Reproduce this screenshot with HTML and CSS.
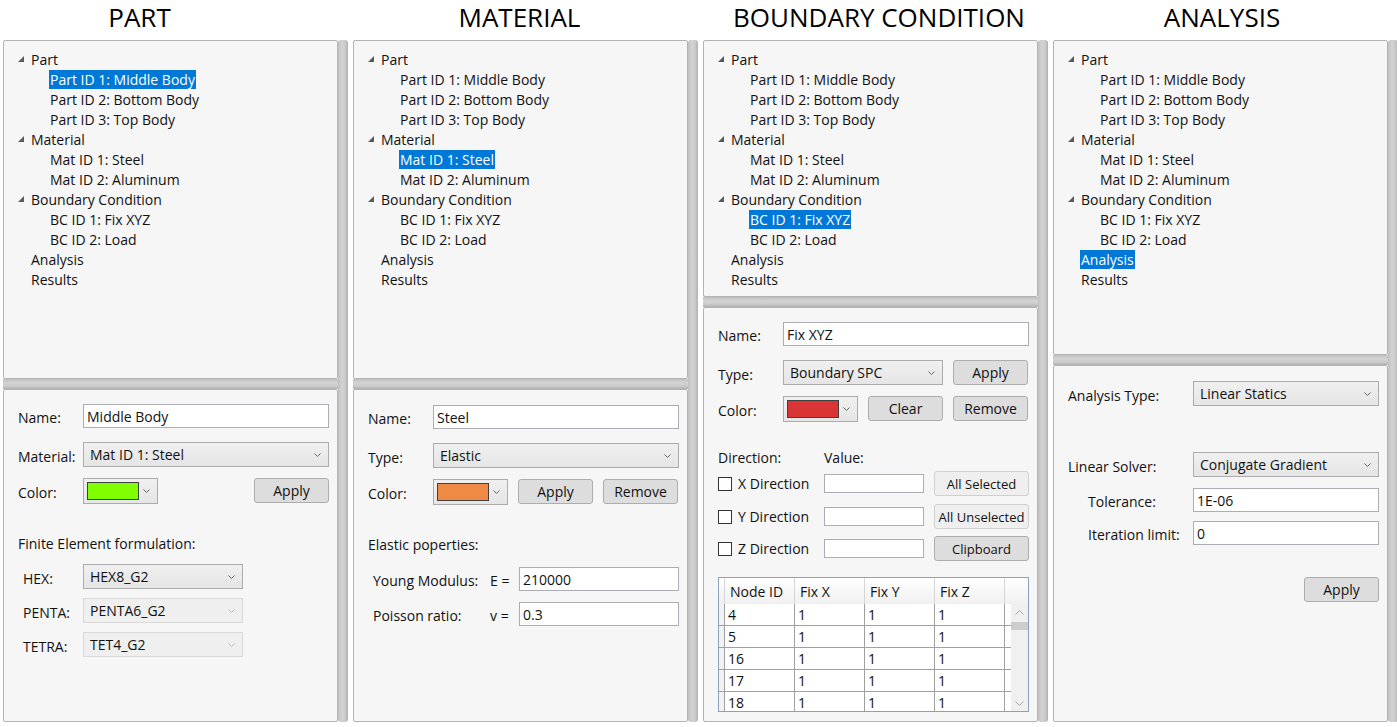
FILE: index.html
```html
<!DOCTYPE html>
<html>
<head>
<meta charset="utf-8">
<link rel="stylesheet" href="styles.css">
</head>
<body>
<div class="app">

  <!-- PART -->
  <section class="col col-part">
    <h1 class="title">PART</h1>
    <div class="col-body">
      <div class="panes">
        <div class="pane tree-pane">
          <div class="tree-row"><span class="exp"><svg width="6" height="6" viewBox="0 0 6 6"><polygon points="6,0 6,6 0,6" fill="#5a5a5a"/></svg></span><span class="tl">Part</span></div>
          <div class="tree-row child"><span class="tl sel">Part ID 1: Middle Body</span></div>
          <div class="tree-row child"><span class="tl">Part ID 2: Bottom Body</span></div>
          <div class="tree-row child"><span class="tl">Part ID 3: Top Body</span></div>
          <div class="tree-row"><span class="exp"><svg width="6" height="6" viewBox="0 0 6 6"><polygon points="6,0 6,6 0,6" fill="#5a5a5a"/></svg></span><span class="tl">Material</span></div>
          <div class="tree-row child"><span class="tl">Mat ID 1: Steel</span></div>
          <div class="tree-row child"><span class="tl">Mat ID 2: Aluminum</span></div>
          <div class="tree-row"><span class="exp"><svg width="6" height="6" viewBox="0 0 6 6"><polygon points="6,0 6,6 0,6" fill="#5a5a5a"/></svg></span><span class="tl">Boundary Condition</span></div>
          <div class="tree-row child"><span class="tl">BC ID 1: Fix XYZ</span></div>
          <div class="tree-row child"><span class="tl">BC ID 2: Load</span></div>
          <div class="tree-row leaf"><span class="tl">Analysis</span></div>
          <div class="tree-row leaf"><span class="tl">Results</span></div>
        </div>
        <div class="hsplit"></div>
        <div class="pane form-pane">
          <div class="row h24"><span class="lbl">Name:</span><div class="tb">Middle Body</div></div>
          <div class="row h25 mt14"><span class="lbl">Material:</span><div class="cb"><span>Mat ID 1: Steel</span><svg class="chev" width="7" height="4" viewBox="0 0 7 4"><polyline points="0.5,0.5 3.5,3.5 6.5,0.5" fill="none" stroke="#666"/></svg></div></div>
          <div class="row h25 mt11"><span class="lbl">Color:</span><div class="cc"><span class="sw green"></span><svg class="chev" width="7" height="4" viewBox="0 0 7 4"><polyline points="0.5,0.5 3.5,3.5 6.5,0.5" fill="none" stroke="#666"/></svg></div><div class="btn push">Apply</div></div>
          <div class="heading mt31">Finite Element formulation:</div>
          <div class="row h25 mt10"><span class="lbl ind">HEX:</span><div class="cb w160"><span>HEX8_G2</span><svg class="chev" width="7" height="4" viewBox="0 0 7 4"><polyline points="0.5,0.5 3.5,3.5 6.5,0.5" fill="none" stroke="#666"/></svg></div></div>
          <div class="row h25 mt9"><span class="lbl ind">PENTA:</span><div class="cb w160 dis"><span>PENTA6_G2</span><svg class="chev" width="7" height="4" viewBox="0 0 7 4"><polyline points="0.5,0.5 3.5,3.5 6.5,0.5" fill="none" stroke="#bbb"/></svg></div></div>
          <div class="row h25 mt9"><span class="lbl ind">TETRA:</span><div class="cb w160 dis"><span>TET4_G2</span><svg class="chev" width="7" height="4" viewBox="0 0 7 4"><polyline points="0.5,0.5 3.5,3.5 6.5,0.5" fill="none" stroke="#bbb"/></svg></div></div>
        </div>
      </div>
      <div class="vsplit"></div>
    </div>
  </section>

  <!-- MATERIAL -->
  <section class="col col-mat">
    <h1 class="title">MATERIAL</h1>
    <div class="col-body">
      <div class="panes">
        <div class="pane tree-pane">
          <div class="tree-row"><span class="exp"><svg width="6" height="6" viewBox="0 0 6 6"><polygon points="6,0 6,6 0,6" fill="#5a5a5a"/></svg></span><span class="tl">Part</span></div>
          <div class="tree-row child"><span class="tl">Part ID 1: Middle Body</span></div>
          <div class="tree-row child"><span class="tl">Part ID 2: Bottom Body</span></div>
          <div class="tree-row child"><span class="tl">Part ID 3: Top Body</span></div>
          <div class="tree-row"><span class="exp"><svg width="6" height="6" viewBox="0 0 6 6"><polygon points="6,0 6,6 0,6" fill="#5a5a5a"/></svg></span><span class="tl">Material</span></div>
          <div class="tree-row child"><span class="tl sel">Mat ID 1: Steel</span></div>
          <div class="tree-row child"><span class="tl">Mat ID 2: Aluminum</span></div>
          <div class="tree-row"><span class="exp"><svg width="6" height="6" viewBox="0 0 6 6"><polygon points="6,0 6,6 0,6" fill="#5a5a5a"/></svg></span><span class="tl">Boundary Condition</span></div>
          <div class="tree-row child"><span class="tl">BC ID 1: Fix XYZ</span></div>
          <div class="tree-row child"><span class="tl">BC ID 2: Load</span></div>
          <div class="tree-row leaf"><span class="tl">Analysis</span></div>
          <div class="tree-row leaf"><span class="tl">Results</span></div>
        </div>
        <div class="hsplit"></div>
        <div class="pane form-pane">
          <div class="row h24 mt1"><span class="lbl">Name:</span><div class="tb">Steel</div></div>
          <div class="row h25 mt14"><span class="lbl">Type:</span><div class="cb"><span>Elastic</span><svg class="chev" width="7" height="4" viewBox="0 0 7 4"><polyline points="0.5,0.5 3.5,3.5 6.5,0.5" fill="none" stroke="#666"/></svg></div></div>
          <div class="row h25 mt11"><span class="lbl">Color:</span><div class="cc"><span class="sw orange"></span><svg class="chev" width="7" height="4" viewBox="0 0 7 4"><polyline points="0.5,0.5 3.5,3.5 6.5,0.5" fill="none" stroke="#666"/></svg></div><div class="btn gap10">Apply</div><div class="btn gap10">Remove</div></div>
          <div class="heading mt31">Elastic poperties:</div>
          <div class="row h24 mt12"><span class="lbl2">Young Modulus:</span><span class="eq">E =</span><div class="tb w160">210000</div></div>
          <div class="row h24 mt11"><span class="lbl2">Poisson ratio:</span><span class="eq">v =</span><div class="tb w160">0.3</div></div>
        </div>
      </div>
      <div class="vsplit"></div>
    </div>
  </section>

  <!-- BOUNDARY CONDITION -->
  <section class="col col-bc">
    <h1 class="title">BOUNDARY CONDITION</h1>
    <div class="col-body">
      <div class="panes">
        <div class="pane tree-pane">
          <div class="tree-row"><span class="exp"><svg width="6" height="6" viewBox="0 0 6 6"><polygon points="6,0 6,6 0,6" fill="#5a5a5a"/></svg></span><span class="tl">Part</span></div>
          <div class="tree-row child"><span class="tl">Part ID 1: Middle Body</span></div>
          <div class="tree-row child"><span class="tl">Part ID 2: Bottom Body</span></div>
          <div class="tree-row child"><span class="tl">Part ID 3: Top Body</span></div>
          <div class="tree-row"><span class="exp"><svg width="6" height="6" viewBox="0 0 6 6"><polygon points="6,0 6,6 0,6" fill="#5a5a5a"/></svg></span><span class="tl">Material</span></div>
          <div class="tree-row child"><span class="tl">Mat ID 1: Steel</span></div>
          <div class="tree-row child"><span class="tl">Mat ID 2: Aluminum</span></div>
          <div class="tree-row"><span class="exp"><svg width="6" height="6" viewBox="0 0 6 6"><polygon points="6,0 6,6 0,6" fill="#5a5a5a"/></svg></span><span class="tl">Boundary Condition</span></div>
          <div class="tree-row child"><span class="tl sel">BC ID 1: Fix XYZ</span></div>
          <div class="tree-row child"><span class="tl">BC ID 2: Load</span></div>
          <div class="tree-row leaf"><span class="tl">Analysis</span></div>
          <div class="tree-row leaf"><span class="tl">Results</span></div>
        </div>
        <div class="hsplit"></div>
        <div class="pane form-pane">
          <div class="row h24"><span class="lbl">Name:</span><div class="tb">Fix XYZ</div></div>
          <div class="row h25 mt14"><span class="lbl">Type:</span><div class="cb w160"><span>Boundary SPC</span><svg class="chev" width="7" height="4" viewBox="0 0 7 4"><polyline points="0.5,0.5 3.5,3.5 6.5,0.5" fill="none" stroke="#666"/></svg></div><div class="btn gap10">Apply</div></div>
          <div class="row h25 mt11"><span class="lbl">Color:</span><div class="cc"><span class="sw red"></span><svg class="chev" width="7" height="4" viewBox="0 0 7 4"><polyline points="0.5,0.5 3.5,3.5 6.5,0.5" fill="none" stroke="#666"/></svg></div><div class="btn gap10">Clear</div><div class="btn gap10">Remove</div></div>
          <div class="row dirhead mt26"><span class="dh1">Direction:</span><span>Value:</span></div>
          <div class="row h25 mt4"><span class="chk"><span class="box"></span>X Direction</span><div class="tb small"></div><div class="btn light wide">All Selected</div></div>
          <div class="row h25 mt8"><span class="chk"><span class="box"></span>Y Direction</span><div class="tb small"></div><div class="btn light wide">All Unselected</div></div>
          <div class="row h25 mt7"><span class="chk"><span class="box"></span>Z Direction</span><div class="tb small"></div><div class="btn wide">Clipboard</div></div>
          <div class="grid">
            <div class="gh">
              <span class="rh"></span>
              <span class="hc">Node ID</span><span class="hc">Fix X</span><span class="hc">Fix Y</span><span class="hc">Fix Z</span>
              <span class="hfill"></span>
            </div>
            <div class="gb">
              <div class="rows">
                <div class="gr"><span class="rh"></span><span class="gc">4</span><span class="gc">1</span><span class="gc">1</span><span class="gc">1</span></div>
                <div class="gr"><span class="rh"></span><span class="gc">5</span><span class="gc">1</span><span class="gc">1</span><span class="gc">1</span></div>
                <div class="gr"><span class="rh"></span><span class="gc">16</span><span class="gc">1</span><span class="gc">1</span><span class="gc">1</span></div>
                <div class="gr"><span class="rh"></span><span class="gc">17</span><span class="gc">1</span><span class="gc">1</span><span class="gc">1</span></div>
                <div class="gr"><span class="rh"></span><span class="gc">18</span><span class="gc">1</span><span class="gc">1</span><span class="gc">1</span></div>
              </div>
              <div class="sb">
                <svg class="sb-up" width="9" height="5" viewBox="0 0 9 5"><polyline points="0.5,4.5 4.5,0.5 8.5,4.5" fill="none" stroke="#a6a6a6"/></svg>
                <span class="thumb"></span>
                <svg class="sb-down" width="9" height="5" viewBox="0 0 9 5"><polyline points="0.5,0.5 4.5,4.5 8.5,0.5" fill="none" stroke="#a6a6a6"/></svg>
              </div>
            </div>
          </div>
        </div>
      </div>
      <div class="vsplit"></div>
    </div>
  </section>

  <!-- ANALYSIS -->
  <section class="col col-an">
    <h1 class="title">ANALYSIS</h1>
    <div class="col-body">
      <div class="panes">
        <div class="pane tree-pane">
          <div class="tree-row"><span class="exp"><svg width="6" height="6" viewBox="0 0 6 6"><polygon points="6,0 6,6 0,6" fill="#5a5a5a"/></svg></span><span class="tl">Part</span></div>
          <div class="tree-row child"><span class="tl">Part ID 1: Middle Body</span></div>
          <div class="tree-row child"><span class="tl">Part ID 2: Bottom Body</span></div>
          <div class="tree-row child"><span class="tl">Part ID 3: Top Body</span></div>
          <div class="tree-row"><span class="exp"><svg width="6" height="6" viewBox="0 0 6 6"><polygon points="6,0 6,6 0,6" fill="#5a5a5a"/></svg></span><span class="tl">Material</span></div>
          <div class="tree-row child"><span class="tl">Mat ID 1: Steel</span></div>
          <div class="tree-row child"><span class="tl">Mat ID 2: Aluminum</span></div>
          <div class="tree-row"><span class="exp"><svg width="6" height="6" viewBox="0 0 6 6"><polygon points="6,0 6,6 0,6" fill="#5a5a5a"/></svg></span><span class="tl">Boundary Condition</span></div>
          <div class="tree-row child"><span class="tl">BC ID 1: Fix XYZ</span></div>
          <div class="tree-row child"><span class="tl">BC ID 2: Load</span></div>
          <div class="tree-row leaf"><span class="tl sel">Analysis</span></div>
          <div class="tree-row leaf"><span class="tl">Results</span></div>
        </div>
        <div class="hsplit"></div>
        <div class="pane form-pane">
          <div class="row h25 mt1"><span class="lbl wide">Analysis Type:</span><div class="cb"><span>Linear Statics</span><svg class="chev" width="7" height="4" viewBox="0 0 7 4"><polyline points="0.5,0.5 3.5,3.5 6.5,0.5" fill="none" stroke="#666"/></svg></div></div>
          <div class="row h25 mt46"><span class="lbl wide">Linear Solver:</span><div class="cb"><span>Conjugate Gradient</span><svg class="chev" width="7" height="4" viewBox="0 0 7 4"><polyline points="0.5,0.5 3.5,3.5 6.5,0.5" fill="none" stroke="#666"/></svg></div></div>
          <div class="row h24 mt11"><span class="lbl wide ind20">Tolerance:</span><div class="tb">1E-06</div></div>
          <div class="row h24 mt9"><span class="lbl wide ind20">Iteration limit:</span><div class="tb">0</div></div>
          <div class="row h25 mt32"><div class="btn push">Apply</div></div>
        </div>
      </div>
      <div class="vsplit"></div>
    </div>
  </section>

</div>
</body>
</html>
```

FILE: styles.css
```css
html, body {
  margin: 0;
  padding: 0;
  background: #ffffff;
}

body {
  width: 1397px;
  height: 727px;
  overflow: hidden;
  font-family: "Open Sans", "Noto Sans", sans-serif;
  font-size: 14px;
  color: #111;
}

.app {
  display: flex;
  gap: 5px;
  padding-left: 3px;
}

.col {
  flex: none;
  width: 345px;
  display: flex;
  flex-direction: column;
}

.title {
  margin: 0;
  height: 40px;
  font-size: 26px;
  font-weight: 400;
  line-height: 34px;
  text-align: center;
  color: #000;
  box-sizing: border-box;
  white-space: nowrap;
}

.col-part .title { padding-right: 72px; }
.col-mat .title { padding-right: 12px; }
.col-bc .title { padding-left: 7px; }
.col-an .title { padding-right: 7px; }

.col-body {
  display: flex;
  height: 682px;
}

.panes {
  width: 335px;
  flex: none;
  display: flex;
  flex-direction: column;
}

.vsplit {
  width: 10px;
  flex: none;
  border-radius: 3px;
  background: linear-gradient(to right, #c0c0c0, #d3d3d3 40%, #cbcbcb 70%, #b0b0b0);
}

.hsplit {
  height: 10px;
  flex: none;
  background: linear-gradient(to bottom, #c0c0c0, #d3d3d3 40%, #cbcbcb 70%, #b0b0b0);
}

.pane {
  background: #f6f6f6;
  border: 1px solid #b3b3b3;
  border-radius: 2px;
  box-sizing: border-box;
}

/* ---------- tree ---------- */
.tree-pane {
  flex: none;
  padding-top: 8px;
}

.col-part .tree-pane,
.col-mat .tree-pane { height: 339px; }
.col-bc .tree-pane { height: 257px; }
.col-an .tree-pane { height: 315px; }

.tree-row {
  display: flex;
  align-items: center;
  height: 20px;
  padding-left: 14px;
}

.tree-row.child { padding-left: 45px; }
.tree-row.leaf { padding-left: 26px; }

.exp {
  width: 12px;
  flex: none;
  display: flex;
  align-items: center;
  margin-top: -1px;
}

.tl {
  padding: 0 1px;
  line-height: 19px;
  white-space: nowrap;
}

.tl.sel {
  background: #0078d7;
  color: #ffffff;
}

/* ---------- forms ---------- */
.form-pane {
  flex: 1;
  padding: 14px 8px 0 14px;
}

.row {
  display: flex;
  align-items: center;
}

.h24 { height: 24px; }
.h25 { height: 25px; }

.mt1 { margin-top: 1px; }
.mt4 { margin-top: 4px; }
.mt7 { margin-top: 7px; }
.mt8 { margin-top: 8px; }
.mt9 { margin-top: 9px; }
.mt10 { margin-top: 10px; }
.mt11 { margin-top: 11px; }
.mt12 { margin-top: 12px; }
.mt14 { margin-top: 14px; }
.mt26 { margin-top: 26px; }
.mt31 { margin-top: 31px; }
.mt32 { margin-top: 32px; }
.mt46 { margin-top: 46px; }

.lbl {
  width: 65px;
  flex: none;
  box-sizing: border-box;
  padding-top: 3px;
  white-space: nowrap;
}

.lbl.wide { width: 125px; }
.lbl.ind { padding-left: 5px; }
.lbl.ind20 { padding-left: 20px; }

.lbl2 {
  flex: 1;
  padding-left: 5px;
  padding-top: 3px;
  white-space: nowrap;
}

.eq {
  width: 29px;
  flex: none;
  padding-top: 3px;
  white-space: nowrap;
}

.heading {
  height: 20px;
  line-height: 20px;
}

.tb {
  flex: 1;
  height: 24px;
  box-sizing: border-box;
  border: 1px solid #abadb3;
  background: #ffffff;
  padding: 0 3px;
  display: flex;
  align-items: center;
  white-space: nowrap;
}

.tb.w160 { flex: none; width: 160px; }

.tb.small {
  flex: none;
  width: 100px;
  height: 19px;
}

.cb {
  flex: 1;
  height: 25px;
  box-sizing: border-box;
  border: 1px solid #acacac;
  background: linear-gradient(to bottom, #f0f0f0, #e5e5e5);
  padding: 0 7px 0 6px;
  display: flex;
  align-items: center;
  justify-content: space-between;
  white-space: nowrap;
}

.cb.w160 { flex: none; width: 160px; }

.cb.dis {
  border-color: #d9d9d9;
  background: #efefef;
}

.chev { flex: none; }

.cc {
  flex: none;
  width: 75px;
  height: 26px;
  box-sizing: border-box;
  border: 1px solid #acacac;
  background: linear-gradient(to bottom, #f0f0f0, #e5e5e5);
  display: flex;
  align-items: center;
  padding: 0 7px 0 3px;
  justify-content: space-between;
}

.sw {
  width: 52px;
  height: 18px;
  box-sizing: border-box;
  border: 1px solid #404040;
}

.sw.green { background: #80ff00; }
.sw.orange { background: #ef8a44; }
.sw.red { background: #d93535; }

.btn {
  flex: none;
  width: 75px;
  height: 25px;
  box-sizing: border-box;
  border: 1px solid #adadad;
  border-radius: 3px;
  background: #dddddd;
  display: flex;
  align-items: center;
  justify-content: center;
  white-space: nowrap;
}

.btn.push { margin-left: auto; }
.btn.gap10 { margin-left: 10px; }

.btn.wide {
  width: 95px;
  margin-left: 10px;
  font-size: 13px;
}

.btn.light {
  background: #efefef;
  border-color: #d0d0d0;
}

/* direction section */
.dirhead { height: 20px; }
.dh1 { width: 106px; flex: none; }

.chk {
  width: 106px;
  flex: none;
  display: flex;
  align-items: center;
  white-space: nowrap;
}

.box {
  width: 14px;
  height: 14px;
  box-sizing: border-box;
  border: 1px solid #333333;
  background: #ffffff;
  margin-right: 6px;
}

/* ---------- data grid ---------- */
.grid {
  margin-top: 16px;
  height: 135px;
  box-sizing: border-box;
  border: 1px solid #8ba0ba;
  background: #ffffff;
  display: flex;
  flex-direction: column;
}

.gh {
  display: flex;
  height: 26px;
  flex: none;
  background: linear-gradient(to bottom, #ffffff, #f0f0f0);
}

.rh {
  width: 6px;
  flex: none;
  background: #f2f2f2;
  box-sizing: border-box;
  border-right: 1px solid #a0a0a0;
}

.gh .rh {
  background: transparent;
  border-right: 1px solid #d5d5d5;
}

.hc {
  width: 70px;
  flex: none;
  box-sizing: border-box;
  border-right: 1px solid #d5d5d5;
  padding-left: 5px;
  display: flex;
  align-items: center;
}

.hfill { flex: 1; }

.gb {
  flex: 1;
  display: flex;
  overflow: hidden;
}

.rows {
  flex: 1;
}

.gr {
  display: flex;
  height: 22px;
  box-sizing: border-box;
  border-top: 1px solid #a0a0a0;
}

.gr:first-child { border-top: none; height: 21px; }

.gc {
  width: 70px;
  flex: none;
  box-sizing: border-box;
  border-right: 1px solid #a0a0a0;
  padding-left: 3px;
  display: flex;
  align-items: center;
}

.sb {
  width: 17px;
  flex: none;
  background: #f0f0f0;
  display: flex;
  flex-direction: column;
  align-items: center;
}

.sb-up { margin-top: 6px; flex: none; }

.thumb {
  align-self: stretch;
  height: 8px;
  margin-top: 7px;
  background: #cdcdcd;
}

.sb-down { margin-top: auto; margin-bottom: 5px; flex: none; }
```
